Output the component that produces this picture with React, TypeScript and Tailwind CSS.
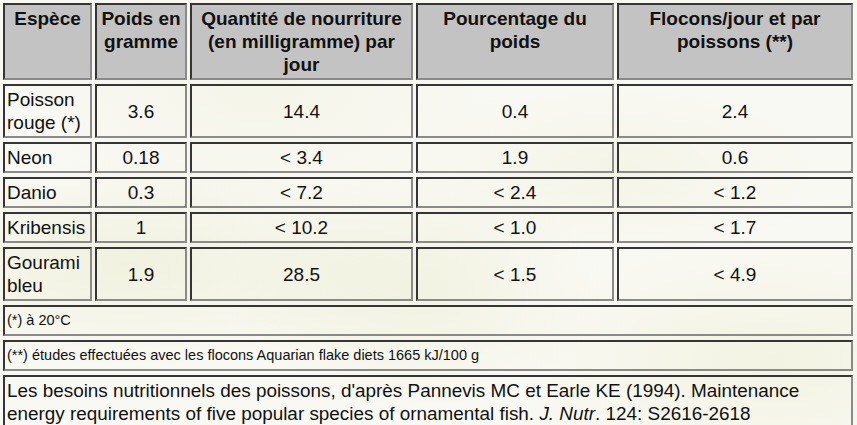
import React from "react";

type Row = { name: string; poids: string; qte: string; pct: string; flocons: string };

const rows: Row[] = [
  { name: "Poisson rouge (*)", poids: "3.6", qte: "14.4", pct: "0.4", flocons: "2.4" },
  { name: "Neon", poids: "0.18", qte: "< 3.4", pct: "1.9", flocons: "0.6" },
  { name: "Danio", poids: "0.3", qte: "< 7.2", pct: "< 2.4", flocons: "< 1.2" },
  { name: "Kribensis", poids: "1", qte: "< 10.2", pct: "< 1.0", flocons: "< 1.7" },
  { name: "Gourami bleu", poids: "1.9", qte: "28.5", pct: "< 1.5", flocons: "< 4.9" },
];

// inset look of an old border="1" table cell
const cell =
  "border-2 border-t-[#353535] border-l-[#353535] border-b-[#8a8a8a] border-r-[#8a8a8a] p-[2px]";

const Th = ({ children, w }: { children: React.ReactNode; w: string }) => (
  <th className={`${cell} ${w} bg-[#c3c3c3] align-top text-center font-bold`}>{children}</th>
);

export default function App() {
  return (
    <div className="h-[425px] w-[857px] overflow-hidden bg-[#f9f9f4] bg-[radial-gradient(ellipse_at_15%_62%,rgba(228,230,190,0.4),transparent_28%),radial-gradient(ellipse_at_48%_68%,rgba(226,229,186,0.35),transparent_30%),radial-gradient(ellipse_at_72%_40%,rgba(232,234,200,0.3),transparent_25%),radial-gradient(ellipse_at_90%_85%,rgba(230,232,192,0.35),transparent_25%),radial-gradient(ellipse_at_30%_20%,rgba(236,237,212,0.35),transparent_30%)] font-['Liberation_Sans',Arial,sans-serif] text-[19px] leading-[23px] text-[#111]">
      <table className="-mt-px w-[856px] table-fixed border-separate border-spacing-x-[3px] border-spacing-y-[4px]">
        <thead>
          <tr>
            <Th w="w-[89px]">Espèce</Th>
            <Th w="w-[92px]">Poids en gramme</Th>
            <Th w="w-[223px]">
              Quantité de nourriture
              <br />
              (en milligramme) par jour
            </Th>
            <Th w="w-[198px]">
              Pourcentage du
              <br />
              poids
            </Th>
            <Th w="w-[236px]">
              Flocons/jour et par
              <br />
              poissons (**)
            </Th>
          </tr>
        </thead>
        <tbody>
          {rows.map((r) => (
            <tr key={r.name}>
              <td className={`${cell} align-middle text-left`}>{r.name}</td>
              <td className={`${cell} align-middle text-center`}>{r.poids}</td>
              <td className={`${cell} align-middle text-center`}>{r.qte}</td>
              <td className={`${cell} align-middle text-center`}>{r.pct}</td>
              <td className={`${cell} align-middle text-center`}>{r.flocons}</td>
            </tr>
          ))}
          <tr>
            <td colSpan={5} className={`${cell} align-middle text-left text-[14.5px] leading-[23px]`}>
              (*) à 20°C
            </td>
          </tr>
          <tr>
            <td colSpan={5} className={`${cell} align-middle text-left text-[14.5px] leading-[23px]`}>
              (**) études effectuées avec les flocons Aquarian flake diets 1665 kJ/100 g
            </td>
          </tr>
          <tr>
            <td colSpan={5} className={`${cell} align-middle text-left text-[18.9px]`}>
              Les besoins nutritionnels des poissons, d'après Pannevis MC et Earle KE (1994). Maintenance
              <br />
              energy requirements of five popular species of ornamental fish. <i>J. Nutr</i>. 124: S2616-2618
            </td>
          </tr>
        </tbody>
      </table>
    </div>
  );
}
